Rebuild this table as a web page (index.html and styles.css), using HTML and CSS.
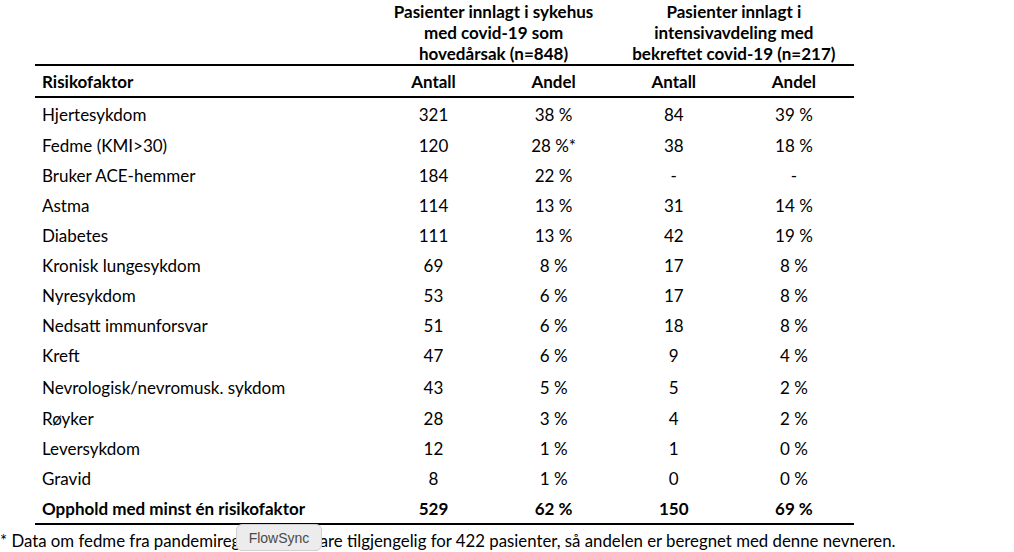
FILE: index.html
```html
<!DOCTYPE html>
<html lang="no">
<head>
<meta charset="utf-8">
<link rel="stylesheet" href="styles.css">
</head>
<body>
<div class="page">
  <table class="risk">
    <colgroup>
      <col class="c-name">
      <col class="c-num">
      <col class="c-num">
      <col class="c-num">
      <col class="c-num">
    </colgroup>
    <thead>
      <tr class="group">
        <th></th>
        <th colspan="2">Pasienter innlagt i sykehus<br>med covid-19 som<br>hovedårsak (n=848)</th>
        <th colspan="2">Pasienter innlagt i<br>intensivavdeling med<br>bekreftet covid-19 (n=217)</th>
      </tr>
      <tr class="head">
        <th class="name">Risikofaktor</th>
        <th>Antall</th>
        <th>Andel</th>
        <th>Antall</th>
        <th>Andel</th>
      </tr>
    </thead>
    <tbody>
      <tr class="first"><td class="name">Hjertesykdom</td><td>321</td><td>38 %</td><td>84</td><td>39 %</td></tr>
      <tr><td class="name">Fedme (KMI&gt;30)</td><td>120</td><td>28 %*</td><td>38</td><td>18 %</td></tr>
      <tr><td class="name">Bruker ACE-hemmer</td><td>184</td><td>22 %</td><td>-</td><td>-</td></tr>
      <tr><td class="name">Astma</td><td>114</td><td>13 %</td><td>31</td><td>14 %</td></tr>
      <tr><td class="name">Diabetes</td><td>111</td><td>13 %</td><td>42</td><td>19 %</td></tr>
      <tr><td class="name">Kronisk lungesykdom</td><td>69</td><td>8 %</td><td>17</td><td>8 %</td></tr>
      <tr><td class="name">Nyresykdom</td><td>53</td><td>6 %</td><td>17</td><td>8 %</td></tr>
      <tr><td class="name">Nedsatt immunforsvar</td><td>51</td><td>6 %</td><td>18</td><td>8 %</td></tr>
      <tr class="r31"><td class="name">Kreft</td><td>47</td><td>6 %</td><td>9</td><td>4 %</td></tr>
      <tr class="r32"><td class="name">Nevrologisk/nevromusk. sykdom</td><td>43</td><td>5 %</td><td>5</td><td>2 %</td></tr>
      <tr><td class="name">Røyker</td><td>28</td><td>3 %</td><td>4</td><td>2 %</td></tr>
      <tr><td class="name">Leversykdom</td><td>12</td><td>1 %</td><td>1</td><td>0 %</td></tr>
      <tr><td class="name">Gravid</td><td>8</td><td>1 %</td><td>0</td><td>0 %</td></tr>
      <tr class="total"><td class="name">Opphold med minst én risikofaktor</td><td>529</td><td>62 %</td><td>150</td><td>69 %</td></tr>
    </tbody>
  </table>
  <p class="note">* Data om fedme fra pandemiregisteret er bare tilgjengelig for 422 pasienter, så andelen er beregnet med denne nevneren.</p>
  <div class="tooltip">FlowSync</div>
</div>
</body>
</html>
```

FILE: styles.css
```css
html, body {
  margin: 0;
  padding: 0;
  background: #ffffff;
}

body {
  font-family: Lato, "Open Sans", "Liberation Sans", sans-serif;
  color: #000000;
  font-size: 17px;
}

.page {
  position: relative;
  width: 1014px;
  height: 552px;
  overflow: hidden;
}

.risk {
  border-collapse: collapse;
  margin-left: 35px;
  width: 819px;
  table-layout: fixed;
}

.c-name { width: 338px; }
.c-num { width: 120px; }

.risk th,
.risk td {
  padding: 0;
  text-align: center;
  white-space: nowrap;
}

.risk .name {
  text-align: left;
  padding-left: 7px;
}

.group th {
  height: 65px;
  vertical-align: bottom;
  line-height: 21px;
  font-weight: 700;
  padding-bottom: 0;
  box-sizing: border-box;
}

.head th {
  height: 30px;
  font-weight: 700;
  border-top: 2px solid #000;
  border-bottom: 2px solid #000;
}

.risk tbody td {
  height: 30px;
}

.risk tbody tr.first td { height: 32px; }
.risk tbody tr.r31 td { height: 31px; }
.risk tbody tr.r32 td { height: 32px; }

.risk tbody tr.total td {
  height: 30px;
  font-weight: 700;
  border-bottom: 2px solid #000;
}

.note {
  margin: 0;
  padding-top: 6px;
  font-size: 16.8px;
  line-height: 20px;
  white-space: nowrap;
}

.tooltip {
  position: absolute;
  left: 236px;
  top: 524px;
  width: 86px;
  height: 27px;
  box-sizing: border-box;
  background: #ececec;
  border: 1px solid #d0d0d0;
  border-radius: 6px;
  font-family: "Liberation Sans", Arial, sans-serif;
  font-size: 14px;
  color: #4a4a4a;
  line-height: 26px;
  text-align: center;
}
```
